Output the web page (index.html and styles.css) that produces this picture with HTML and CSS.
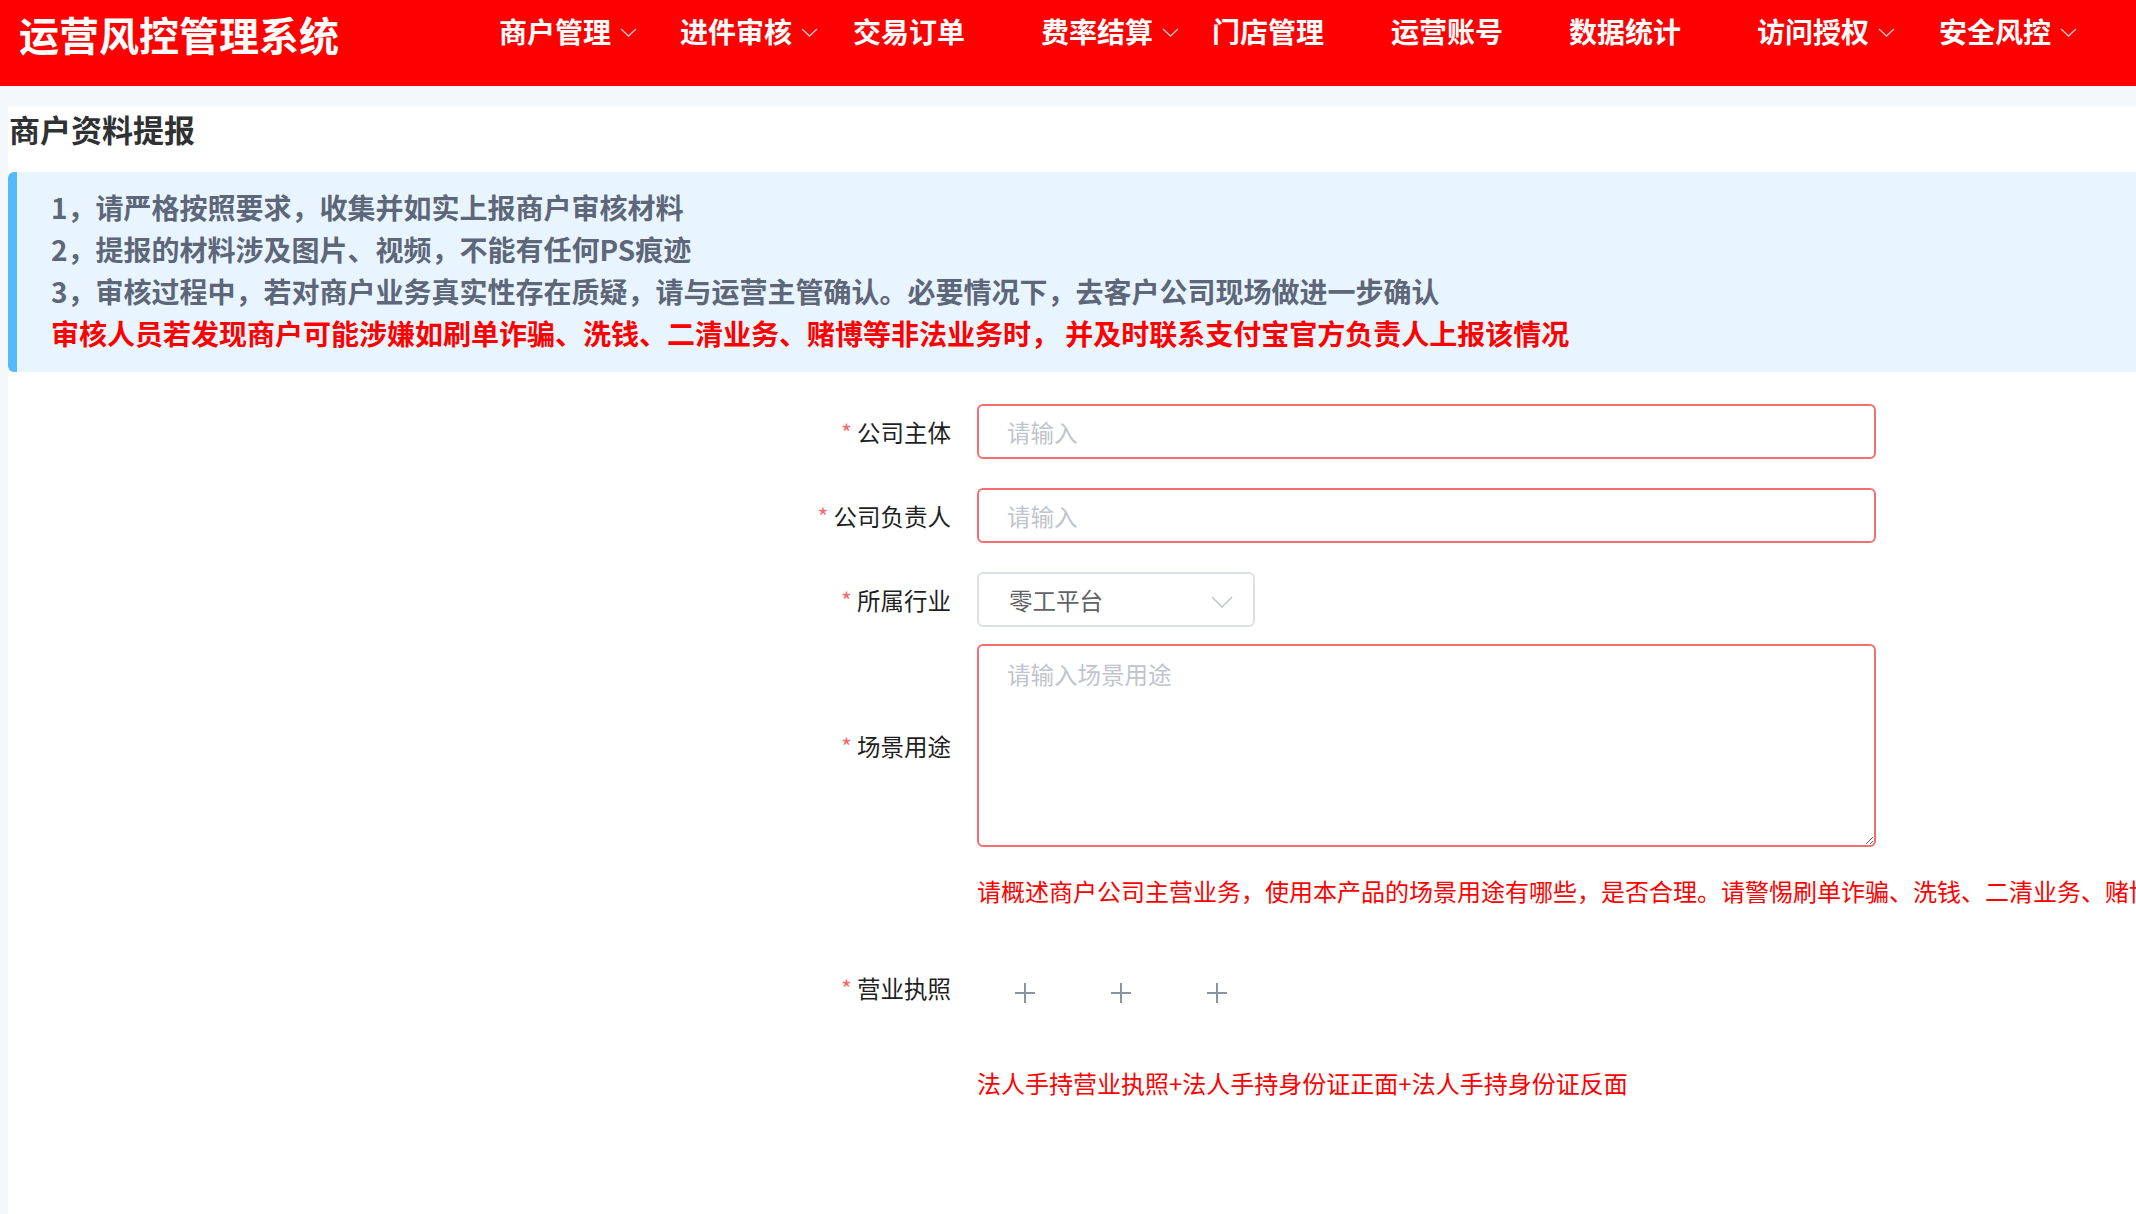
FILE: index.html
```html
<!DOCTYPE html>
<html lang="zh-CN">
<head>
<meta charset="utf-8">
<title>运营风控管理系统</title>
<link rel="stylesheet" href="styles.css">
</head>
<body>
<header class="topbar">
  <div class="brand">运营风控管理系统</div>
  <nav class="menu">
    <div class="menu-item">商户管理<svg class="caret" viewBox="0 0 17 9"><path d="M1 1 L8.5 8 L16 1"/></svg></div>
    <div class="menu-item">进件审核<svg class="caret" viewBox="0 0 17 9"><path d="M1 1 L8.5 8 L16 1"/></svg></div>
    <div class="menu-item">交易订单</div>
    <div class="menu-item">费率结算<svg class="caret" viewBox="0 0 17 9"><path d="M1 1 L8.5 8 L16 1"/></svg></div>
    <div class="menu-item">门店管理</div>
    <div class="menu-item">运营账号</div>
    <div class="menu-item">数据统计</div>
    <div class="menu-item">访问授权<svg class="caret" viewBox="0 0 17 9"><path d="M1 1 L8.5 8 L16 1"/></svg></div>
    <div class="menu-item">安全风控<svg class="caret" viewBox="0 0 17 9"><path d="M1 1 L8.5 8 L16 1"/></svg></div>
  </nav>
</header>
<main class="page">
  <section class="panel">
    <h2 class="panel-title">商户资料提报</h2>
    <div class="notice">
      <p>1，请严格按照要求，收集并如实上报商户审核材料</p>
      <p>2，提报的材料涉及图片、视频，不能有任何PS痕迹</p>
      <p>3，审核过程中，若对商户业务真实性存在质疑，请与运营主管确认。必要情况下，去客户公司现场做进一步确认</p>
      <p class="notice-warn">审核人员若发现商户可能涉嫌如刷单诈骗、洗钱、二清业务、赌博等非法业务时， 并及时联系支付宝官方负责人上报该情况</p>
    </div>
    <form class="form">
      <div class="form-item item-first">
        <label class="form-label"><span class="req">*</span>公司主体</label>
        <input class="input is-error" type="text" placeholder="请输入">
      </div>
      <div class="form-item item-gap">
        <label class="form-label"><span class="req">*</span>公司负责人</label>
        <input class="input is-error" type="text" placeholder="请输入">
      </div>
      <div class="form-item item-gap">
        <label class="form-label"><span class="req">*</span>所属行业</label>
        <div class="select">
          <span class="select-value">零工平台</span>
          <svg class="select-arrow" viewBox="0 0 22 12"><path d="M1 1 L11 11 L21 1"/></svg>
        </div>
      </div>
      <div class="form-item item-area">
        <label class="form-label"><span class="req">*</span>场景用途</label>
        <textarea class="textarea is-error" placeholder="请输入场景用途"></textarea>
      </div>
      <div class="form-help help-area">
        <span class="help-text">请概述商户公司主营业务，使用本产品的场景用途有哪些，是否合理。请警惕刷单诈骗、洗钱、二清业务、赌博等非法业务的商户</span>
      </div>
      <div class="form-item item-upload">
        <label class="form-label"><span class="req">*</span>营业执照</label>
        <div class="uploads">
          <div class="upload-box"><svg class="plus" viewBox="0 0 20 20"><path d="M10 0 V20 M0 10 H20"/></svg></div>
          <div class="upload-box"><svg class="plus" viewBox="0 0 20 20"><path d="M10 0 V20 M0 10 H20"/></svg></div>
          <div class="upload-box"><svg class="plus" viewBox="0 0 20 20"><path d="M10 0 V20 M0 10 H20"/></svg></div>
        </div>
      </div>
      <div class="form-help help-upload">
        <span class="help-text">法人手持营业执照+法人手持身份证正面+法人手持身份证反面</span>
      </div>
    </form>
  </section>
</main>
</body>
</html>
```
FILE: styles.css
```css
* {
  box-sizing: border-box;
}

html, body {
  margin: 0;
  padding: 0;
  height: 100%;
}

body {
  font-family: "Noto Sans CJK SC", "Noto Sans", "Liberation Sans", sans-serif;
  background: #f5f8fb;
  overflow: hidden;
  color: #303133;
}

/* ---------- header ---------- */
.topbar {
  height: 86px;
  background: #ff0000;
  display: flex;
  align-items: flex-start;
}

.brand {
  width: 499px;
  padding-left: 19px;
  margin-top: 14px;
  font-size: 40px;
  line-height: 40px;
  font-weight: 700;
  color: #ffffff;
  white-space: nowrap;
}

.menu {
  display: grid;
  grid-template-columns: 181px 173px 188px 171px 179px 178px 188px 182px auto;
  margin-top: 17px;
}

.menu-item {
  display: flex;
  align-items: center;
  font-size: 28px;
  line-height: 28px;
  font-weight: 700;
  color: #ffffff;
  white-space: nowrap;
}

.caret {
  width: 17px;
  height: 9px;
  margin-left: 9px;
  margin-top: 2px;
  fill: none;
  stroke: #c6c8cc;
  stroke-width: 1.3;
}

/* ---------- page ---------- */
.page {
  padding: 20px 0 0 8px;
  min-height: calc(100vh - 86px);
}

.panel {
  background: #ffffff;
  min-height: calc(100vh - 106px);
  padding-top: 6px;
  overflow: hidden;
}

.panel-title {
  margin: 0 0 0 -8px;
  height: 33px;
  border-left: 3px solid #1a7cff;
  padding-left: 6px;
  font-size: 31px;
  line-height: 33px;
  font-weight: 700;
  color: #303133;
}

.notice {
  margin-top: 27px;
  background: #e9f5fe;
  border-left: 9px solid #55b9fd;
  border-radius: 6px 0 0 6px;
  padding: 14px 0 18px 34px;
}

.notice p {
  margin: 0;
  font-size: 28px;
  line-height: 42px;
  font-weight: 700;
  color: #5d6779;
  white-space: nowrap;
}

.notice .notice-warn {
  color: #ff0000;
}

/* ---------- form ---------- */
.form {
  margin: 0;
}

.form-item {
  display: grid;
  grid-template-columns: 943px 899px;
  column-gap: 26px;
  align-items: center;
}

.item-first {
  margin-top: 32px;
}

.item-gap {
  margin-top: 29px;
}

.item-area {
  margin-top: 17px;
}

.item-upload {
  margin-top: 37px;
}

.form-label {
  text-align: right;
  font-size: 23.5px;
  line-height: 34px;
  color: #1f1f1f;
  white-space: nowrap;
}

.item-upload .form-label {
  align-self: start;
  margin-top: 26px;
}

.req {
  color: #f56c6c;
  margin-right: 5px;
}

.input {
  width: 899px;
  height: 55px;
  border: 2px solid #dcdfe6;
  border-radius: 6px;
  padding: 0 28px;
  font-family: inherit;
  font-size: 23.5px;
  color: #606266;
  outline: none;
  background: #ffffff;
}

.input::placeholder,
.textarea::placeholder {
  color: #c0c4cc;
}

.is-error {
  border-color: #f36f6f;
}

.select {
  width: 278px;
  height: 55px;
  border: 2px solid #dcdfe6;
  border-radius: 6px;
  padding: 0 20px 0 30px;
  display: flex;
  align-items: center;
  justify-content: space-between;
}

.select-value {
  font-size: 23.5px;
  line-height: 34px;
  color: #606266;
}

.select-arrow {
  width: 22px;
  height: 12px;
  margin-top: 4px;
  fill: none;
  stroke: #c0c4cc;
  stroke-width: 1.5;
}

.textarea {
  display: block;
  width: 899px;
  height: 203px;
  border: 2px solid #dcdfe6;
  border-radius: 6px;
  padding: 11px 28px;
  font-family: inherit;
  font-size: 23.5px;
  line-height: 34px;
  color: #606266;
  outline: none;
  resize: vertical;
  background: #ffffff;
}

.textarea.is-error {
  border-color: #f36f6f;
}

.form-help {
  padding-left: 969px;
}

.help-area {
  margin-top: 27px;
}

.help-upload {
  margin-top: 25px;
}

.help-text {
  display: block;
  font-size: 24px;
  line-height: 34px;
  color: #ff0000;
  white-space: nowrap;
}

.uploads {
  display: flex;
}

.upload-box {
  width: 96px;
  height: 96px;
  display: flex;
  align-items: center;
  justify-content: center;
}

.plus {
  width: 20px;
  height: 20px;
  fill: none;
  stroke: #8c939d;
  stroke-width: 2;
}
```
